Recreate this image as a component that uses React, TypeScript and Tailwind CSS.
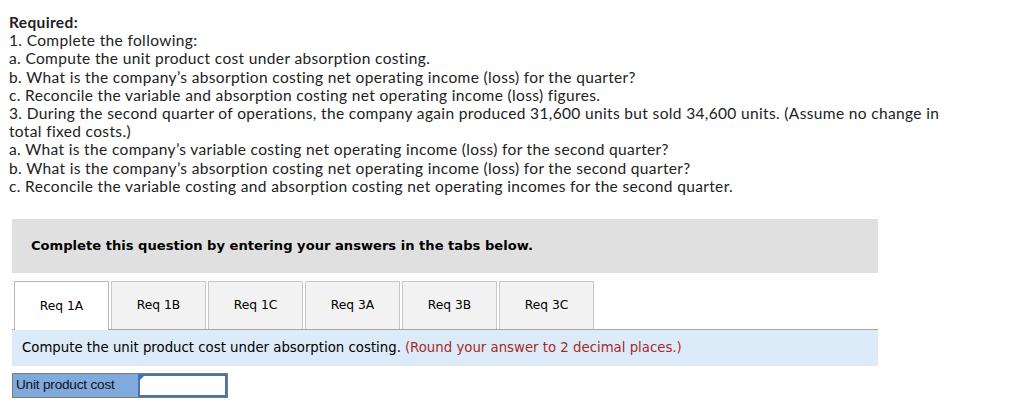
const lines = [
  "1. Complete the following:",
  "a. Compute the unit product cost under absorption costing.",
  "b. What is the company\u2019s absorption costing net operating income (loss) for the quarter?",
  "c. Reconcile the variable and absorption costing net operating income (loss) figures.",
  "3. During the second quarter of operations, the company again produced 31,600 units but sold 34,600 units. (Assume no change in total fixed costs.)",
  "a. What is the company\u2019s variable costing net operating income (loss) for the second quarter?",
  "b. What is the company\u2019s absorption costing net operating income (loss) for the second quarter?",
  "c. Reconcile the variable costing and absorption costing net operating incomes for the second quarter.",
];

const tabs = ["Req 1A", "Req 1B", "Req 1C", "Req 3A", "Req 3B", "Req 3C"];

export default function App() {
  return (
    <div className="h-[406px] w-[1024px] bg-white text-black">
      <div className="w-[948px] pl-[9px] pt-[13px] font-['Lato',sans-serif] text-[15.5px] leading-[18.2px] tracking-[0.35px] text-[#222]">
        <p className="font-bold">Required:</p>
        {lines.map((l, i) => (
          <p key={i}>{l}</p>
        ))}
      </div>

      <div className="ml-[12px] mt-[24px] w-[866px]">
        <div className="flex h-[54px] items-center bg-[#e0e0e0] pl-[19px] font-['DejaVu_Sans',sans-serif] text-[13.1px] font-bold">
          Complete this question by entering your answers in the tabs below.
        </div>

        <div className="mt-[8px] flex gap-[2px] pl-[2px]">
          {tabs.map((t, i) => (
            <div
              key={t}
              className={
                i === 0
                  ? "mb-[-1px] flex h-[49px] w-[95px] items-center justify-center border border-b-0 border-[#b8b8b8] bg-white font-['DejaVu_Sans',sans-serif] text-[12.3px]"
                  : "flex h-[48px] w-[95px] items-center justify-center border border-b-0 border-[#c8c8c8] bg-[#f2f2f2] font-['DejaVu_Sans',sans-serif] text-[12.3px]"
              }
            >
              {t}
            </div>
          ))}
        </div>

        <div className="flex h-[37px] items-center border-t border-[#a6a6a6] bg-[#ddebf8] pl-[10px] font-['DejaVu_Sans',sans-serif] text-[13.3px]">
          <span>Compute the unit product cost under absorption costing.</span>
          <span className="ml-[4px] text-[#a52a2a]">(Round your answer to 2 decimal places.)</span>
        </div>

        <div className="mt-[7px] flex h-[25px] w-[216px] border border-[#7b7b7b]">
          <div className="flex w-[125px] items-center bg-[#80a9dd] pl-[3px] font-['Liberation_Sans',sans-serif] text-[13.6px] tracking-[-0.2px] text-[#111]">
            Unit product cost
          </div>
          <div className="relative flex-1 border-2 border-[#4a72ad] bg-white">
            <svg className="absolute left-[-1px] top-[-1px]" width="6" height="6" viewBox="0 0 6 6">
              <polygon points="0,0 6,0 0,6" fill="#3d6fc0" />
            </svg>
          </div>
        </div>
      </div>
    </div>
  );
}
